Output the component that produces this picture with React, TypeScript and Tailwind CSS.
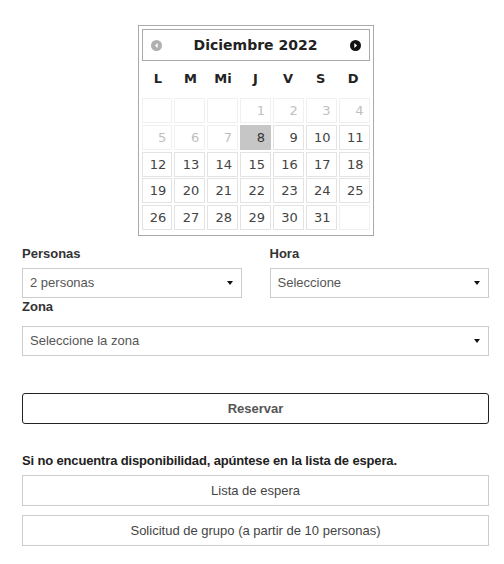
import { useState } from "react";

const dayNames = ["L", "M", "Mi", "J", "V", "S", "D"];

type Cell = { day?: number; disabled?: boolean };

function buildCells(): Cell[] {
    const cells: Cell[] = [{}, {}, {}];
    for (let d = 1; d <= 31; d++) {
        cells.push({ day: d, disabled: d < 8 });
    }
    cells.push({});
    return cells;
}

function Caret() {
    return (
        <svg width="6" height="4" viewBox="0 0 6 4" className="shrink-0">
            <path d="M0 0 L6 0 L3 4 Z" fill="#111" />
        </svg>
    );
}

function Select({ value, className = "" }: { value: string; className?: string }) {
    return (
        <div className={`flex items-center justify-between h-[30px] border border-[#cccccc] bg-white pl-[7px] pr-[8px] text-[13px] text-[#555] ${className}`}>
            <span>{value}</span>
            <Caret />
        </div>
    );
}

function Calendar() {
    const [selected, setSelected] = useState(8);
    const cells = buildCells();

    return (
        <div className="w-[236px] border border-[#aaaaaa] bg-white p-[3px] pb-[5px] font-['DejaVu_Sans',Verdana,sans-serif]">
            <div className="flex items-center justify-between h-[32px] border border-[#aaaaaa] pl-[8px] pr-[8px]">
                <svg width="11" height="11" viewBox="0 0 12 12">
                    <circle cx="6" cy="6" r="6" fill="#b0b0b0" />
                    <path d="M7.3 3.2 L4.2 6 L7.3 8.8 Z" fill="#fff" />
                </svg>
                <span className="text-[14px] font-bold text-[#222]">Diciembre 2022</span>
                <svg width="11" height="11" viewBox="0 0 12 12">
                    <circle cx="6" cy="6" r="6" fill="#111" />
                    <path d="M4.7 3.2 L7.8 6 L4.7 8.8 Z" fill="#fff" />
                </svg>
            </div>

            <div className="grid grid-cols-7 h-[34px] pt-[1px] items-center text-[13px] font-bold text-[#222]">
                {dayNames.map((name) => (
                    <div key={name} className="text-center">{name}</div>
                ))}
            </div>

            <div className="grid grid-cols-7 gap-x-[2px] gap-y-[1.75px] mt-[3px]">
                {cells.map((cell, index) => {
                    if (!cell.day) {
                        return <div key={index} className="h-[25px] border border-[#f0f0f0]"></div>;
                    }
                    if (cell.disabled) {
                        return (
                            <div key={index} className="h-[25px] border border-[#f0f0f0] text-right pr-[5px] text-[13px] leading-[23px] text-[#c0c0c0]">
                                {cell.day}
                            </div>
                        );
                    }
                    const isSel = cell.day === selected;
                    return (
                        <div
                            key={index}
                            onClick={() => setSelected(cell.day!)}
                            className={`h-[25px] border text-right pr-[5px] text-[13px] leading-[23px] cursor-pointer ${isSel ? "bg-[#c6c6c6] border-[#c6c6c6] text-[#333]" : "bg-white border-[#e3e3e3] text-[#444]"}`}
                        >
                            {cell.day}
                        </div>
                    );
                })}
            </div>
        </div>
    );
}

export default function App() {
    return (
        <div className="min-h-screen bg-white font-['Liberation_Sans',Arial,sans-serif] text-[#333]">
            <div className="ml-[22px] w-[467px] pt-[25px]">
                <div className="flex justify-center">
                    <Calendar />
                </div>

                <div className="grid grid-cols-2 gap-x-[28px] mt-[10px]">
                    <div>
                        <p className="text-[13px] font-bold leading-[15px]">Personas</p>
                        <Select value="2 personas" className="mt-[7px]" />
                    </div>
                    <div>
                        <p className="text-[13px] font-bold leading-[15px]">Hora</p>
                        <Select value="Seleccione" className="mt-[7px]" />
                    </div>
                </div>

                <p className="text-[13px] font-bold leading-[15px] mt-[1px]">Zona</p>
                <Select value="Seleccione la zona" className="mt-[12px]" />

                <button className="mt-[37px] w-full h-[31px] border border-[#222] rounded-[3px] bg-white text-[13px] font-bold text-[#555]">
                    Reservar
                </button>

                <p className="mt-[29px] text-[13px] font-bold text-[#222] leading-[16px] tracking-[-0.15px]">
                    Si no encuentra disponibilidad, apúntese en la lista de espera.
                </p>
                <button className="mt-[6px] w-full h-[31px] border border-[#cccccc] bg-white text-[13px] text-[#444]">
                    Lista de espera
                </button>
                <button className="mt-[9px] w-full h-[31px] border border-[#cccccc] bg-white text-[13px] text-[#444]">
                    Solicitud de grupo (a partir de 10 personas)
                </button>
            </div>
        </div>
    );
}
